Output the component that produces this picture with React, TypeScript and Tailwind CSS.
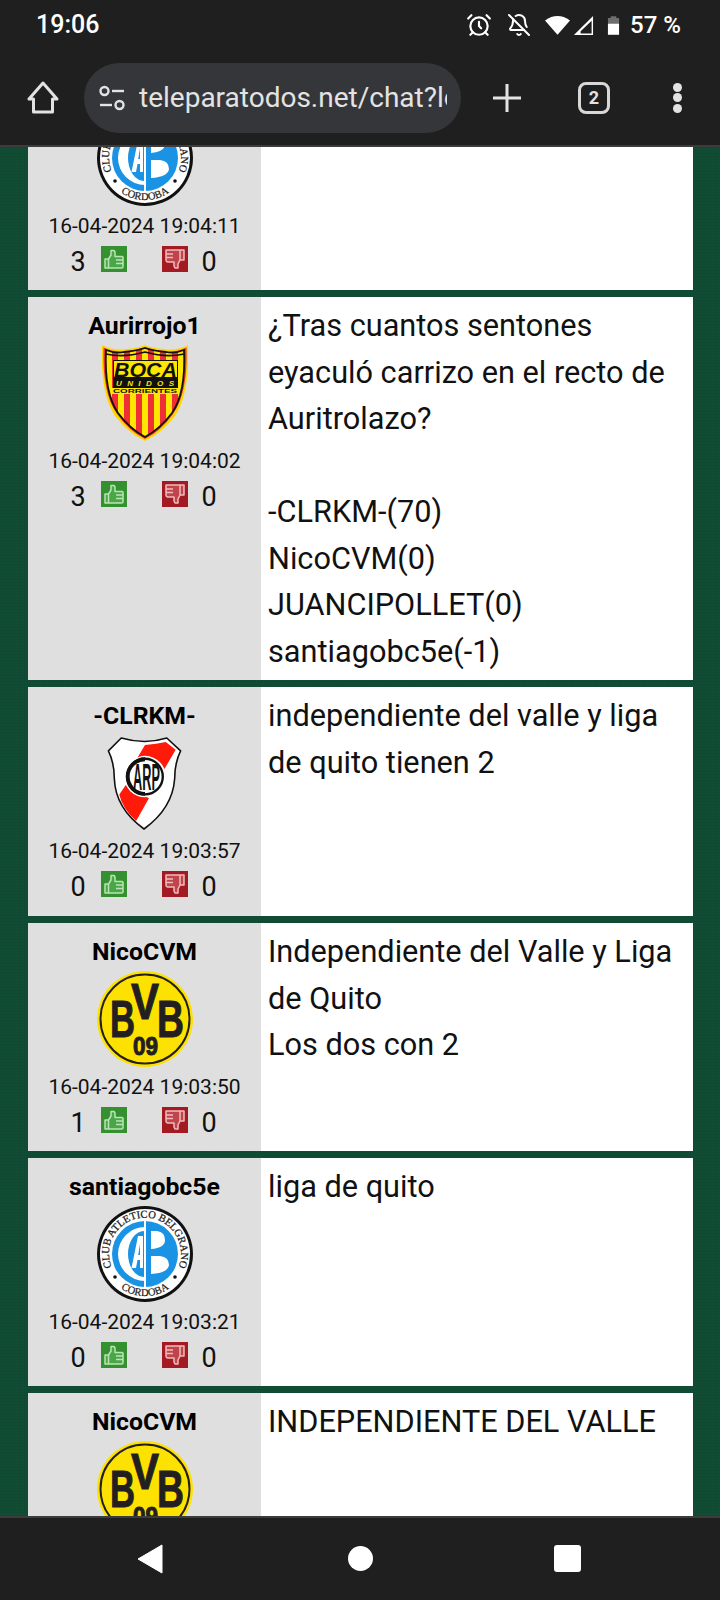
import React from 'react';
import { AlarmClock, BellOff } from 'lucide-react';

const Belgrano: React.FC = () => (
  <svg viewBox="0 0 96 96" className="w-[96px] h-[96px]">
    <defs>
      <path id="bel-top" d="M 17 66 A 36 36 0 1 1 79 66" />
      <path id="bel-bot" d="M 18 77.4 A 42 42 0 0 0 78 77.4" />
    </defs>
    <circle cx="48" cy="48" r="48" fill="#111" />
    <circle cx="48" cy="48" r="45" fill="#fff" />
    <text fontFamily="'Liberation Serif', serif" fontSize="10.5" fill="#1a1a1a" stroke="#1a1a1a" strokeWidth="0.25">
      <textPath href="#bel-top" startOffset="50%" textAnchor="middle">CLUB ATLETICO BELGRANO</textPath>
    </text>
    <text fontFamily="'Liberation Serif', serif" fontSize="10.5" fill="#1a1a1a" stroke="#1a1a1a" strokeWidth="0.2">
      <textPath href="#bel-bot" startOffset="50%" textAnchor="middle">CORDOBA</textPath>
    </text>
    <circle cx="18" cy="71" r="1.8" fill="#111" />
    <circle cx="78" cy="71" r="1.8" fill="#111" />
    <circle cx="48" cy="48" r="33" fill="#1a93e4" />
    <path d="M48 21 A 27 27 0 0 0 48 75 Z" fill="#fff" />
    <path d="M47 25 A 16 23 0 0 0 47 71 Z" fill="#1a93e4" />
    <rect x="47" y="15" width="2" height="66" fill="#fff" />
    <path d="M54 25 H60 Q68 26 68 34 Q68 42 54 43 Z M54 50 H63 Q72 51 72 59 Q71 67 54 68 Z" fill="#fff" />
    <path d="M41 30 L34.5 62 H39 L40.5 54 H43 V62 H46 V30 Z M41.2 49 L43 38 V49 Z" fill="#fff" fillRule="evenodd" />
  </svg>
);

const BocaUnidos: React.FC = () => (
  <svg viewBox="0 0 86 96" className="w-[86px] h-[96px]">
    <defs>
      <clipPath id="boca-clip">
        <path d="M4 5 Q14 9 22 7 Q34 6 43 3 Q52 6 64 7 Q72 9 82 5 Q84 48 70 68 Q58 84 43 92 Q28 84 16 68 Q2 48 4 5 Z" />
      </clipPath>
    </defs>
    <path d="M0 0 Q12 6 24 4 Q36 3 43 0 Q50 3 62 4 Q74 6 86 0 Q88 48 73 71 Q60 88 43 96 Q26 88 13 71 Q-2 48 0 0 Z" fill="#fdd800" />
    <path d="M1.5 2.5 Q13 8 23 6 Q35 5 43 2 Q51 5 63 6 Q73 8 84.5 2.5 Q86 48 71 69 Q59 86 43 94 Q27 86 15 69 Q0 48 1.5 2.5 Z" fill="#ee2f36" />
    <g clipPath="url(#boca-clip)">
      <rect x="0" y="0" width="86" height="96" fill="#ee2f36" />
      <rect x="4" y="0" width="6" height="96" fill="#ffe600" />
      <rect x="16" y="0" width="6" height="96" fill="#ffe600" />
      <rect x="28" y="0" width="6" height="96" fill="#ffe600" />
      <rect x="40" y="0" width="6" height="96" fill="#ffe600" />
      <rect x="52" y="0" width="6" height="96" fill="#ffe600" />
      <rect x="64" y="0" width="6" height="96" fill="#ffe600" />
      <rect x="76" y="0" width="6" height="96" fill="#ffe600" />
    </g>
    <path d="M4 5 Q14 9 22 7 Q34 6 43 3 Q52 6 64 7 Q72 9 82 5 Q84 48 70 68 Q58 84 43 92 Q28 84 16 68 Q2 48 4 5 Z" fill="none" stroke="#111" strokeWidth="1.8" />
    <path d="M4 9 Q22 13 43 7 Q64 13 82 9" fill="none" stroke="#111" strokeWidth="1.6" />
    <rect x="11" y="15" width="65" height="34" fill="#111" />
    <rect x="12" y="16" width="63" height="16" fill="#ffe600" />
    <text x="12" y="31.5" fontFamily="'Liberation Sans', sans-serif" fontWeight="700" fontStyle="italic" fontSize="20" fill="#111" textLength="63" lengthAdjust="spacingAndGlyphs">BOCA</text>
    <text x="14" y="41" fontFamily="'Liberation Sans', sans-serif" fontWeight="700" fontStyle="italic" fontSize="8" fill="#ffe600" textLength="58">UNIDOS</text>
    <rect x="10" y="43" width="66" height="6" fill="#ffe600" />
    <text x="11" y="48" fontFamily="'Liberation Sans', sans-serif" fontWeight="700" fontSize="5.5" fill="#111" textLength="64" lengthAdjust="spacingAndGlyphs">CORRIENTES</text>
  </svg>
);

const RiverPlate: React.FC = () => (
  <svg viewBox="0 0 75 94" className="w-[75px] h-[93px]">
    <path d="M1 14 L14 1 Q38 8 60 1 L74 14 Q68 26 68 42 Q66 72 37 93 Q8 72 7 42 Q7 26 1 14 Z" fill="#fff" stroke="#111" strokeWidth="1.6" strokeLinejoin="round" />
    <path d="M38 8 Q50 7 59 5 L69 13 L52 42 L25 30 Z" fill="#ff1a0a" />
    <path d="M19 48 L42 62 L29 85 Q15 72 12 58 Z" fill="#ff1a0a" />
    <circle cx="38" cy="40" r="21" fill="#fff" />
    <circle cx="38" cy="40" r="18" fill="#fff" stroke="#111" strokeWidth="2.4" />
    <path d="M38 20.5 A 19.5 19.5 0 0 0 38 59.5 L38 55.5 A 15.5 15.5 0 0 1 38 24.5 Z" fill="#111" />
    <text x="26" y="54" fontFamily="'Liberation Sans', sans-serif" fontWeight="700" fontSize="38" fill="#111" textLength="27" lengthAdjust="spacingAndGlyphs">ARP</text>
  </svg>
);

const Bvb: React.FC = () => {
  const font = "'Liberation Sans', sans-serif";
  return (
    <svg viewBox="0 0 96 96" className="w-[96px] h-[96px]">
      <circle cx="48" cy="48" r="48" fill="#fde100" />
      <circle cx="48" cy="48" r="44.5" fill="#fde100" stroke="#231f20" strokeWidth="2" />
      <g fontFamily={font} fontWeight="700" fill="#231f20" stroke="#231f20" strokeWidth="1">
        <text x="13" y="66" fontSize="51" textLength="25" lengthAdjust="spacingAndGlyphs">B</text>
        <text x="60" y="66" fontSize="51" textLength="27" lengthAdjust="spacingAndGlyphs">B</text>
        <text x="34" y="48" fontSize="50" textLength="28" lengthAdjust="spacingAndGlyphs">V</text>
        <text x="36" y="84" fontSize="25" textLength="25" lengthAdjust="spacingAndGlyphs">09</text>
      </g>
    </svg>
  );
};

const ThumbUp: React.FC = () => (
  <svg viewBox="0 0 26 26" className="w-[26px] h-[26px] block bg-[#35902f]">
    <path d="M4 13 H7.5 V22 H4 Z M7.5 13 L10 9 V4.5 H13 L14 6 V10.5 H21 Q22.5 11 22 13 V21 Q22 22 20.5 22 H7.5 M15 14 H22 M15 17.5 H22" fill="#4aa647" stroke="#b9e4b5" strokeWidth="1.5" strokeLinejoin="round" />
  </svg>
);

const ThumbDown: React.FC = () => (
  <svg viewBox="0 0 26 26" className="w-[26px] h-[26px] block bg-[#a31a22]">
    <path d="M4 4 H22 V14 H18 L16 18 V22 H13 L12 20 V16 H5.5 Q4 15.5 4 14 Z M4 8 H11 M4 11.5 H11 M18 4 V14" fill="#c0444c" stroke="#efbcbc" strokeWidth="1.5" strokeLinejoin="round" />
  </svg>
);

const Row: React.FC<{
  name: string;
  date: string;
  up: number;
  logo: React.ReactNode;
  height: string;
  children: React.ReactNode;
}> = ({ name, date, up, logo, height, children }) => (
  <div className={`flex shrink-0 ${height}`}>
    <div className="w-[233px] bg-[#dfdfdf] flex flex-col items-center pt-[15px]">
      <div className="text-[24.8px] leading-[28px] font-bold text-black">{name}</div>
      <div className="mt-[5px] h-[96px] flex items-center justify-center">{logo}</div>
      <div className="mt-[6px] text-[21px] leading-[28px] text-[#111]">{date}</div>
      <div className="mt-[4px] w-full h-[30px] flex items-center text-[27px] text-[#111]">
        <span className="w-[36px] ml-[32px] pt-[7px] text-center">{up}</span>
        <span className="ml-[5px]"><ThumbUp /></span>
        <span className="ml-[35px]"><ThumbDown /></span>
        <span className="w-[28px] ml-[7px] pt-[7px] text-center">0</span>
      </div>
    </div>
    <div className="flex-1 bg-white pl-[7px] pt-[6px] text-[30.7px] leading-[46.5px] text-[#111] whitespace-pre-line">
      {children}
    </div>
  </div>
);

export default function App() {
  return (
    <div className="w-[720px] h-[1600px] flex flex-col overflow-hidden bg-[#114d35] font-['Roboto',sans-serif]">
      {/* Status bar and browser toolbar */}
      <header className="h-[147px] shrink-0 bg-[#1f1f1f] border-b-2 border-[#3c3c3c] text-[#e3e3e3]">
        <div className="h-[50px] flex items-center pl-[36px] pr-[39px] text-white">
          <span className="text-[25px] font-medium">19:06</span>
          <div className="ml-auto flex items-center">
            <AlarmClock className="w-[26px] h-[26px]" strokeWidth={2} />
            <BellOff className="w-[24px] h-[24px] ml-[15px]" strokeWidth={2} />
            <svg viewBox="0 0 28 22" className="w-[25px] h-[20px] ml-[14px]">
              <path d="M0 6 Q14 -4 28 6 L14 22 Z" fill="#fff" />
            </svg>
            <svg viewBox="0 0 22 22" className="w-[23px] h-[21px] ml-[2px]">
              <path d="M1 21 L21 1 V21 Z M8 19.5 H19.5 V6 L8 17 Z" fill="#fff" fillRule="evenodd" />
            </svg>
            <svg viewBox="0 0 14 22" className="w-[13px] h-[21px] ml-[12px]">
              <path d="M1 3 H4 V1 H10 V3 H13 V9 H1 Z" fill="#6e6e6e" />
              <path d="M1 9 H13 V21 H1 Z" fill="#fff" />
            </svg>
            <span className="ml-[10px] text-[24px] font-medium">57 %</span>
          </div>
        </div>
        <div className="h-[95px] flex items-center">
          <svg viewBox="0 0 32 33" className="w-[32px] h-[33px] ml-[27px]" fill="none" stroke="#e3e3e3" strokeWidth="3" strokeLinejoin="round">
            <path d="M16 2 L2 18 H6.5 V31 H25.5 V18 H30 Z" />
          </svg>
          <div className="ml-[25px] w-[377px] h-[70px] rounded-[35px] bg-[#35363a] flex items-center pl-[15px] pr-[14px]">
            <svg viewBox="0 0 26 26" className="w-[26px] h-[26px] shrink-0" fill="none" stroke="#e3e3e3" strokeWidth="2.4">
              <circle cx="5.5" cy="6" r="4" />
              <path d="M13 6 H25" />
              <path d="M1 20 H13" />
              <circle cx="20.5" cy="20" r="4" />
            </svg>
            <div className="ml-[14px] flex-1 min-w-0 overflow-hidden">
              <span className="text-[28px] whitespace-nowrap">teleparatodos.net/chat?lo</span>
            </div>
          </div>
          <svg viewBox="0 0 28 28" className="w-[28px] h-[28px] ml-[32px]" stroke="#e3e3e3" strokeWidth="3">
            <path d="M14 0 V28 M0 14 H28" />
          </svg>
          <div className="ml-[57px] w-[32px] h-[32px] rounded-[8px] border-[3px] border-[#d8d8d8] flex items-center justify-center text-[18px] font-bold">2</div>
          <div className="ml-[63px] flex flex-col gap-[1.5px]">
            <div className="w-[9px] h-[9px] rounded-full bg-[#e3e3e3]" />
            <div className="w-[9px] h-[9px] rounded-full bg-[#e3e3e3]" />
            <div className="w-[9px] h-[9px] rounded-full bg-[#e3e3e3]" />
          </div>
        </div>
      </header>

      {/* Chat rows */}
      <main className="flex-1 min-h-0 overflow-hidden pl-[28px] pr-[27px] bg-[image:repeating-linear-gradient(0deg,rgba(0,0,0,0.04)_0_1px,transparent_1px_3px),repeating-linear-gradient(90deg,rgba(0,0,0,0.04)_0_1px,transparent_1px_3px)]">
        <div className="-mt-[85px] flex flex-col gap-[7px]">
          <Row name="santiagobc5e" date="16-04-2024 19:04:11" up={3} logo={<Belgrano />} height="h-[228px]">{''}</Row>
          <Row name="Aurirrojo1" date="16-04-2024 19:04:02" up={3} logo={<BocaUnidos />} height="h-[383px]">
            {'¿Tras cuantos sentones eyaculó carrizo en el recto de Auritrolazo?\n\n-CLRKM-(70)\nNicoCVM(0)\nJUANCIPOLLET(0)\nsantiagobc5e(-1)'}
          </Row>
          <Row name="-CLRKM-" date="16-04-2024 19:03:57" up={0} logo={<RiverPlate />} height="h-[229px]">
            independiente del valle y liga de quito tienen 2
          </Row>
          <Row name="NicoCVM" date="16-04-2024 19:03:50" up={1} logo={<Bvb />} height="h-[228px]">
            {'Independiente del Valle y Liga de Quito\nLos dos con 2'}
          </Row>
          <Row name="santiagobc5e" date="16-04-2024 19:03:21" up={0} logo={<Belgrano />} height="h-[228px]">
            liga de quito
          </Row>
          <Row name="NicoCVM" date="16-04-2024 19:03:11" up={0} logo={<Bvb />} height="h-[228px]">
            INDEPENDIENTE DEL VALLE
          </Row>
        </div>
      </main>

      {/* Android nav bar */}
      <footer className="h-[84px] shrink-0 bg-[#1f1f1f] border-t-2 border-[#3c3c3c] flex items-start pt-[26px]">
        <svg viewBox="0 0 26 30" className="w-[26px] h-[30px] ml-[137px]">
          <path d="M25 1 V29 L1 15 Z" fill="#fff" stroke="#fff" strokeLinejoin="round" />
        </svg>
        <div className="w-[25px] h-[25px] rounded-full bg-white ml-[185px] mt-[2px]" />
        <div className="w-[27px] h-[27px] rounded-[3px] bg-white ml-[181px] mt-[1px]" />
      </footer>
    </div>
  );
}
